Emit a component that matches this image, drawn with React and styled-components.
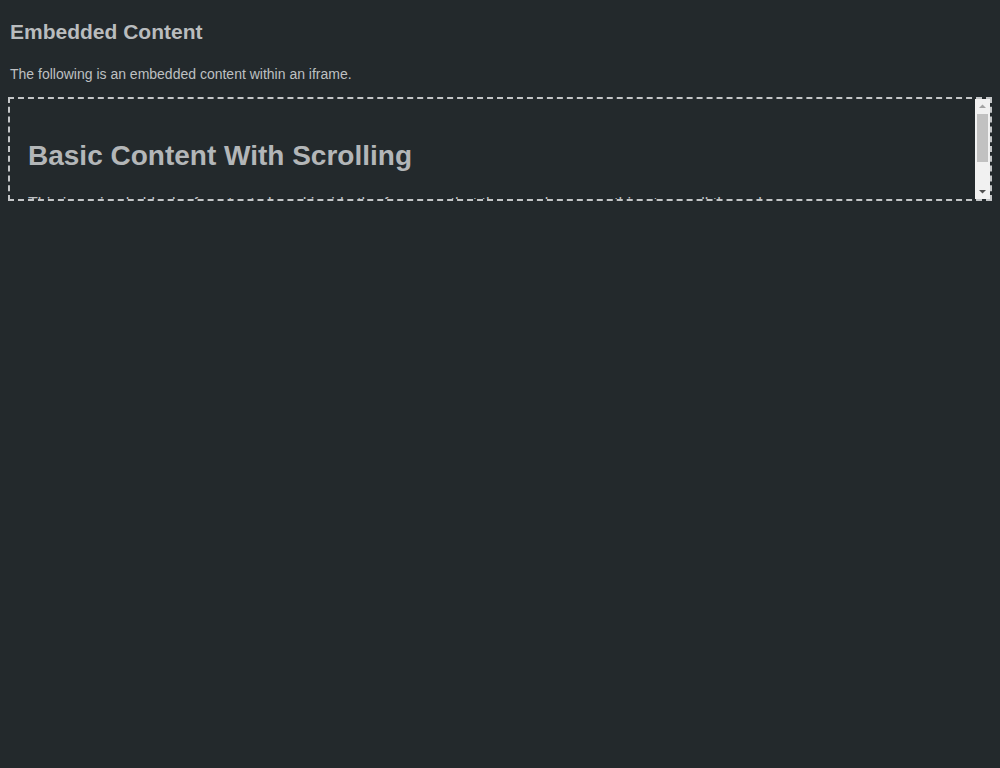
import styled, { createGlobalStyle } from "styled-components";

const Global = createGlobalStyle`
  html, body {
    margin: 0;
    background: #23292c;
  }
  body {
    font-family: "Liberation Sans", Arial, sans-serif;
    color: #bec0c2;
  }
`;

const Page = styled.div`
  padding: 8px;
  display: flex;
  flex-direction: column;
`;

const Title = styled.h2`
  margin: 12px 0 0;
  padding-left: 2px;
  font-size: 21px;
  line-height: 24px;
  font-weight: bold;
  color: #b9bcbe;
`;

const Intro = styled.p`
  margin: 22px 0 15px;
  padding-left: 2px;
  font-size: 14px;
  line-height: 16px;
`;

const Frame = styled.div`
  box-sizing: border-box;
  width: 100%;
  height: 104px;
  border: 2px dashed #c4c6c8;
  display: flex;
`;

const Viewport = styled.div`
  flex: 1;
  min-width: 0;
  overflow: hidden;
  padding: 16px 16px 12px 18px;
`;

const ScrollBar = styled.div`
  width: 15px;
  flex: none;
  display: flex;
  flex-direction: column;
  background: #f1f1f1;
`;

const ArrowButton = styled.div`
  height: 15px;
  flex: none;
  display: flex;
  align-items: center;
  justify-content: center;
`;

const Track = styled.div`
  flex: 1;
  padding: 0 2px;
`;

const Thumb = styled.div`
  height: 48px;
  background: #c1c1c1;
`;

const FrameHeading = styled.h1`
  margin: 25px 0 22px;
  font-size: 28px;
  line-height: 32px;
  font-weight: bold;
  color: #b3b6b8;
`;

const FrameText = styled.p`
  margin: 0;
  font-size: 16px;
  line-height: 19px;
`;

const Arrow = ({ down, color }) => (
  <svg width="15" height="15" viewBox="0 0 15 15">
    <path d={down ? "M4 6h7L7.5 9.5z" : "M4 9h7L7.5 5.5z"} fill={color} />
  </svg>
);

export default function App() {
  return (
    <>
      <Global />
      <Page>
        <Title>Embedded Content</Title>
        <Intro>The following is an embedded content within an iframe.</Intro>
        <Frame>
          <Viewport>
            <FrameHeading>Basic Content With Scrolling</FrameHeading>
            <FrameText>
              This is a simple block of content placed inside the frame so that the area has something to scroll through.
            </FrameText>
            <FrameText>Keep scrolling to read the rest of it.</FrameText>
          </Viewport>
          <ScrollBar>
            <ArrowButton>
              <Arrow color="#a3a3a3" />
            </ArrowButton>
            <Track>
              <Thumb />
            </Track>
            <ArrowButton>
              <Arrow down color="#505050" />
            </ArrowButton>
          </ScrollBar>
        </Frame>
      </Page>
    </>
  );
}
